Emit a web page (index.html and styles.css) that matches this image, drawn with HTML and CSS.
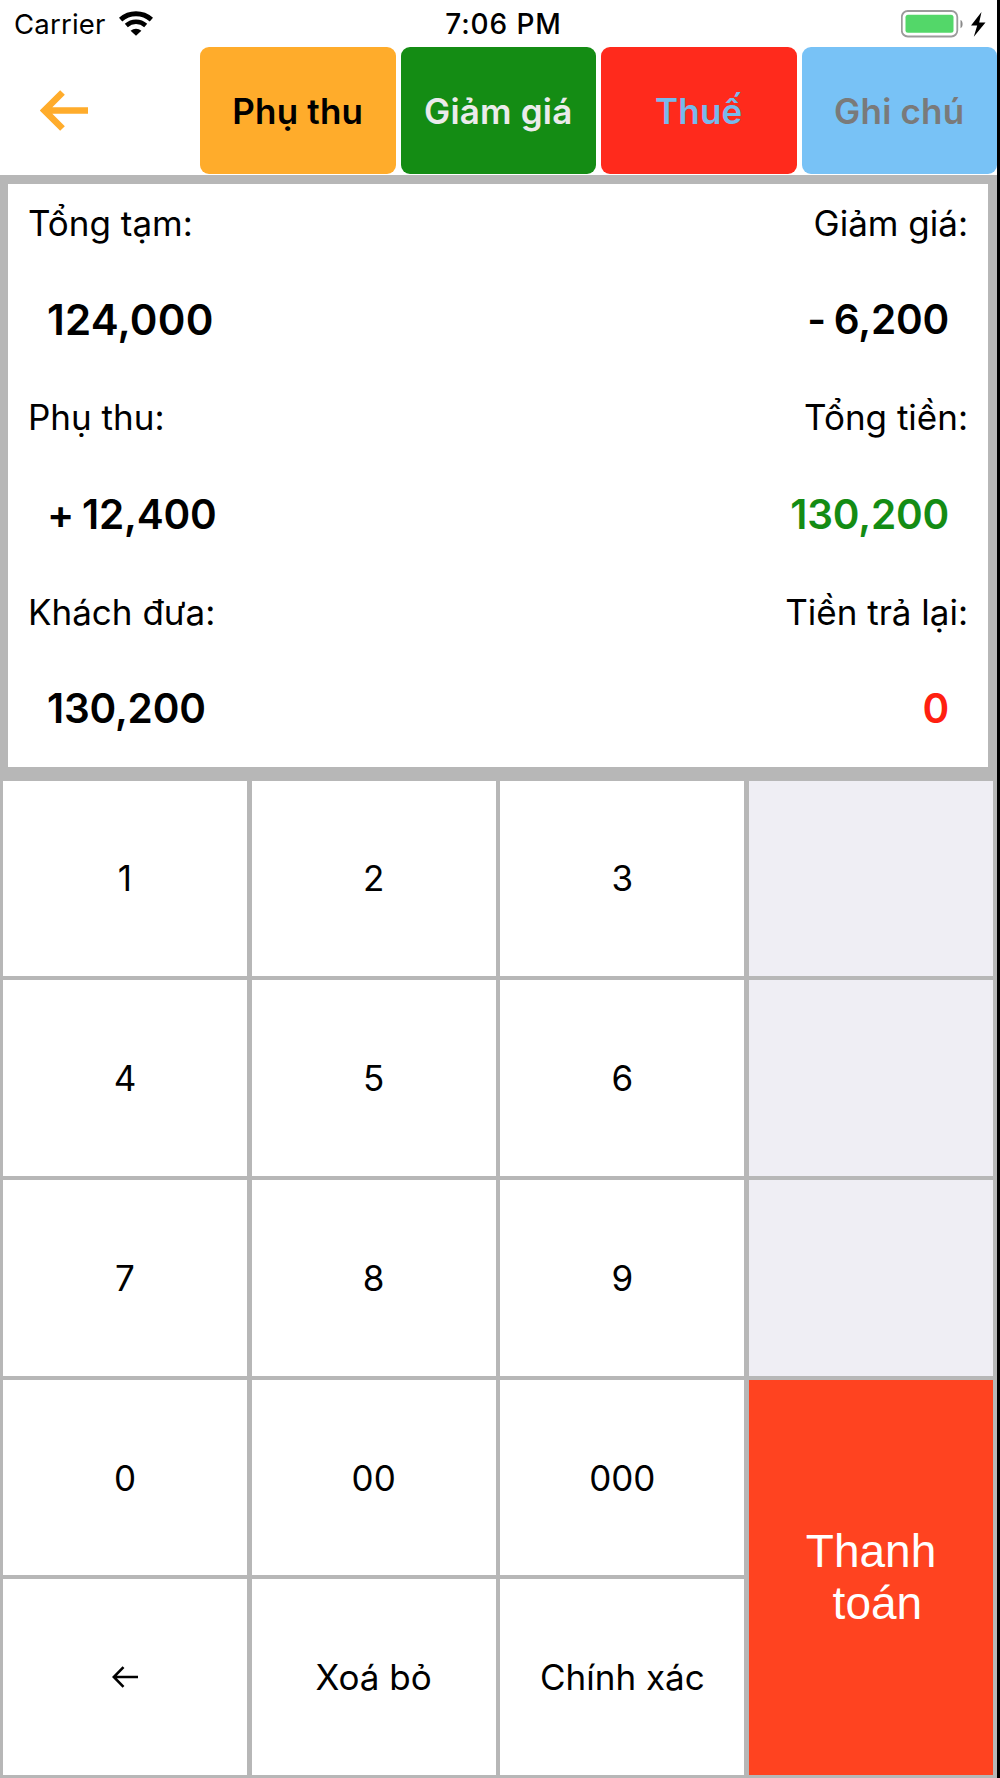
FILE: index.html
```html
<!DOCTYPE html>
<html lang="vi">
<head>
    <meta charset="UTF-8">
    <meta name="viewport" content="width=device-width, initial-scale=1.0">
    <title>Thanh toán</title>
    <link rel="stylesheet" href="styles.css">
</head>
<body>
    <div class="screen">
        <header class="status-bar">
            <div class="status-left">
                <span class="carrier">Carrier</span>
                <svg class="wifi" width="34" height="25" viewBox="0 0 34 25">
                    <path d="M1.600 8.600C10.500 .8 23.500 .8 32.400 8.600" fill="none" stroke="#000" stroke-width="5"/>
                    <path d="M7.300 14.400c5.600-4.900 13.800-4.900 19.400 0" fill="none" stroke="#000" stroke-width="4.600"/>
                    <path d="M11.600 19.800c3.200-2.900 7.600-2.900 10.800 0L17 24.800z"/>
                </svg>
            </div>
            <span class="clock">7:06 PM</span>
            <div class="status-right">
                <svg width="86" height="28" viewBox="0 0 86 28">
                    <rect x="0.800" y="1" width="55.500" height="25.500" rx="6" fill="#fff" stroke="#9b9b9b" stroke-width="1.800"/>
                    <rect x="4.500" y="4.700" width="48" height="18" rx="2.500" fill="#53d769"/>
                    <path d="M59.500 10c2.800 1 2.800 7.200 0 8.200z" fill="#8a8a8a"/>
                    <path d="M80.500 2L70 15.500h6.200l-3.400 11.200L84.500 12.500h-6.300z"/>
                </svg>
            </div>
        </header>

        <nav class="toolbar">
            <button class="back">
                <svg width="48" height="41" viewBox="0 0 48 41">
                    <path d="M48 20.500H5M22.500 2.500L4.500 20.500l18 18" fill="none" stroke="#ffac2b" stroke-width="6.600"/>
                </svg>
            </button>
            <button class="tool surcharge">Phụ thu</button>
            <button class="tool discount">Giảm giá</button>
            <button class="tool tax">Thuế</button>
            <button class="tool note">Ghi chú</button>
        </nav>

        <section class="summary">
            <div class="label">Tổng tạm:</div>
            <div class="label right">Giảm giá:</div>
            <div class="value large">124,000</div>
            <div class="value right">- 6,200</div>
            <div class="label">Phụ thu:</div>
            <div class="label right">Tổng tiền:</div>
            <div class="value">+ 12,400</div>
            <div class="value right total">130,200</div>
            <div class="label">Khách đưa:</div>
            <div class="label right">Tiền trả lại:</div>
            <div class="value">130,200</div>
            <div class="value right change">0</div>
        </section>

        <section class="keypad">
            <button class="key">1</button>
            <button class="key">2</button>
            <button class="key">3</button>
            <div class="key empty"></div>
            <button class="key">4</button>
            <button class="key">5</button>
            <button class="key">6</button>
            <div class="key empty"></div>
            <button class="key">7</button>
            <button class="key">8</button>
            <button class="key">9</button>
            <div class="key empty"></div>
            <button class="key">0</button>
            <button class="key">00</button>
            <button class="key">000</button>
            <button class="key pay"><span>Thanh<br>&nbsp;toán</span></button>
            <button class="key">
                <svg width="26" height="22" viewBox="0 0 26 22">
                    <path d="M26 11H2M11.500 1.200L1.800 11l9.700 9.800" fill="none" stroke="#000" stroke-width="2.600"/>
                </svg>
            </button>
            <button class="key">Xoá bỏ</button>
            <button class="key">Chính xác</button>
        </section>
    </div>
</body>
</html>
```
FILE: styles.css
```css
* {
    box-sizing: border-box;
}
body {
    margin: 0;
    background-color: #000;
    font-family: 'Inter', 'Liberation Sans', sans-serif;
    color: #000;
}
button {
    margin: 0;
    padding: 0;
    border: none;
    font-family: inherit;
    color: inherit;
    cursor: pointer;
}
.screen {
    display: flex;
    flex-direction: column;
    width: 997px;
    height: 1778px;
    background-color: #b7b7b7;
}

/* status bar */
.status-bar {
    display: grid;
    grid-template-columns: 1fr auto 1fr;
    align-items: center;
    height: 47px;
    padding: 0 10px 0 14px;
    background-color: #fff;
    font-size: 27.5px;
}
.status-left {
    display: flex;
    align-items: center;
    gap: 13px;
}
.carrier {
    letter-spacing: 0.2px;
}
.clock {
    font-size: 28px;
    font-weight: 500;
    letter-spacing: 0.9px;
    padding-left: 6px;
}
.status-right {
    display: flex;
    justify-content: flex-end;
}

/* toolbar */
.toolbar {
    display: grid;
    grid-template-columns: 195px repeat(4, 1fr);
    column-gap: 5px;
    height: 127.5px;
    padding-bottom: 0.5px;
    background-color: #fff;
}
.back {
    display: flex;
    align-items: center;
    padding-left: 40px;
    background: none;
}
.tool {
    border-radius: 9px;
    font-size: 35px;
    font-weight: 600;
    letter-spacing: 0.2px;
}
.surcharge { background-color: #ffac2b; color: #000; }
.discount { background-color: #148c14; color: #ebebeb; }
.tax { background-color: #ff2a1c; color: #78b9eb; }
.note { background-color: #78c2f6; color: #7a7a7a; }

/* totals */
.summary {
    display: grid;
    grid-template-columns: 1fr 1fr;
    grid-auto-rows: 97.2px;
    height: 582.5px;
    margin: 9.5px 9px 13px 8px;
    padding: 0 20px;
    background-color: #fff;
}
.label,
.value {
    line-height: 78px;
    white-space: nowrap;
}
.label {
    font-size: 35px;
}
.value {
    padding: 0 19px;
    font-size: 40.5px;
    font-weight: 600;
    letter-spacing: -0.2px;
    word-spacing: -2px;
}
.large {
    font-size: 42px;
    letter-spacing: 0.2px;
}
.right { text-align: right; }
.total { color: #148c14; }
.change { color: #ff2010; }

/* keypad */
.keypad {
    display: grid;
    flex: 1;
    grid-template-columns: repeat(4, 1fr);
    grid-template-rows: repeat(5, 1fr);
    gap: 4.2px 4.7px;
    padding: 1.2px 4px 3px 3px;
}
.key {
    display: flex;
    align-items: center;
    justify-content: center;
    background-color: #fff;
    font-size: 35px;
}
.empty {
    background-color: #efeef4;
}
.pay {
    grid-row: 4 / 6;
    grid-column: 4;
    background-color: #ff4320;
    color: #fff;
    font-family: 'Liberation Sans', Arial, sans-serif;
    font-size: 46px;
    line-height: 52px;
}
```
